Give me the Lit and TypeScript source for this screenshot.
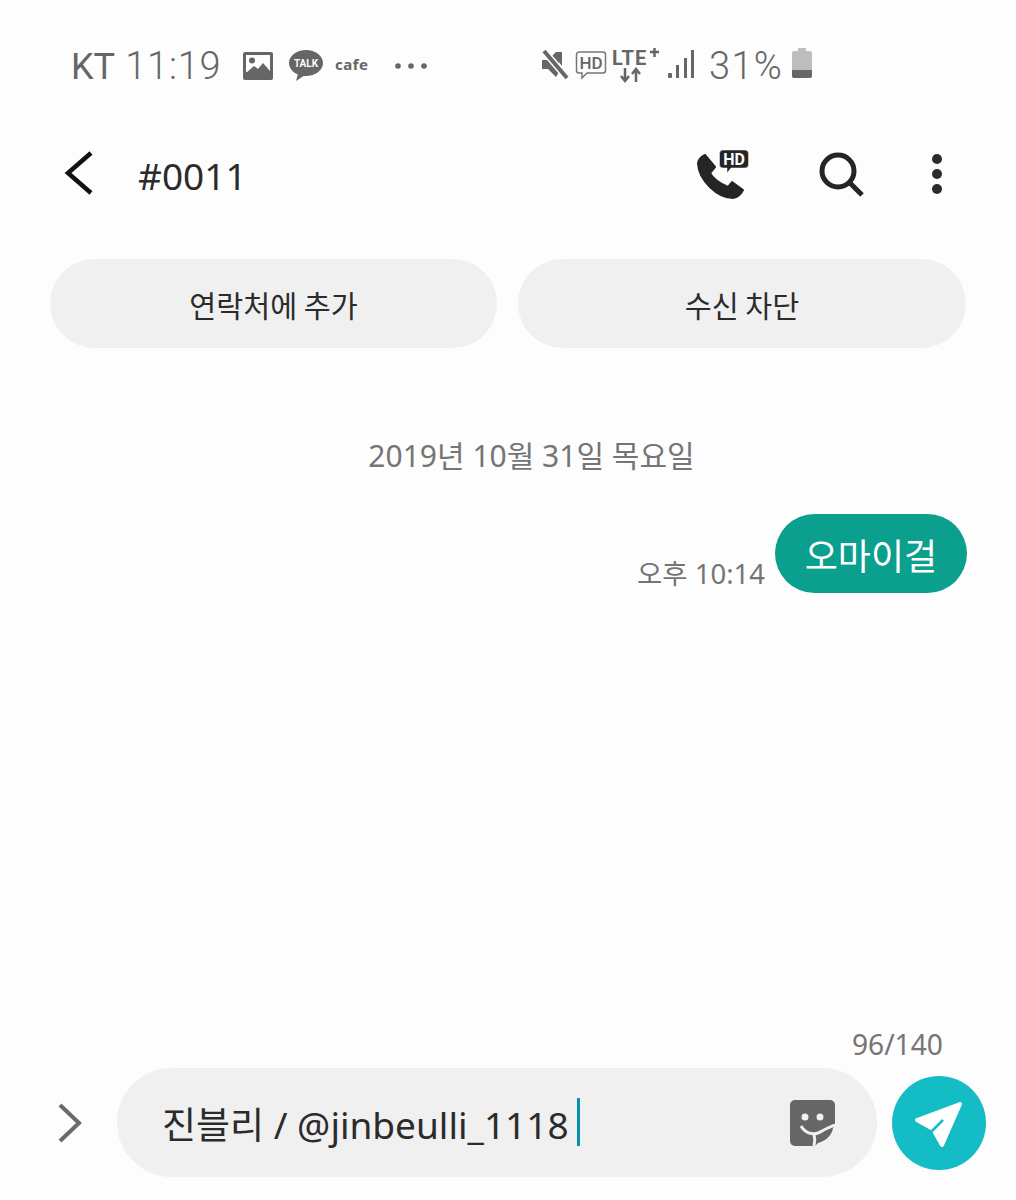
import { LitElement, html, css } from "lit";
import { customElement } from "lit/decorators.js";

@customElement("app-root")
export class AppRoot extends LitElement {
  static styles = css`
    :host {
      display: block;
      width: 1016px;
      height: 1200px;
      background: #fdfdfd;
      font-family: "Roboto", "Noto Sans CJK KR", sans-serif;
      color: #252525;
      overflow: hidden;
    }
    svg {
      display: block;
      flex: none;
      overflow: visible;
    }
    .page {
      height: 1200px;
      display: flex;
      flex-direction: column;
    }

    .status {
      height: 60px;
      margin-top: 36px;
      padding-left: 71px;
      display: flex;
      align-items: center;
      color: #666;
    }
    .status .left {
      display: flex;
      align-items: center;
      width: 471px;
    }
    .status .right {
      display: flex;
      align-items: center;
    }
    .carrier {
      font-size: 36px;
      width: 172px;
      white-space: nowrap;
    }
    .clock {
      font-size: 38px;
      font-weight: 300;
      letter-spacing: 0.8px;
    }
    .cafe {
      font-family: "Noto Sans", sans-serif;
      font-size: 15px;
      font-weight: 700;
      letter-spacing: 0.5px;
      margin: 0 25px 4px 12px;
    }
    .up2 {
      margin-bottom: 3px;
    }
    .up6 {
      margin-bottom: 6px;
    }
    .batt-text {
      font-size: 38px;
      font-weight: 300;
      letter-spacing: 1.3px;
      margin: 0 9px 0 14px;
    }

    .header {
      height: 78px;
      margin-top: 38px;
      display: flex;
      align-items: center;
      padding: 0 72px 0 64px;
    }
    .title {
      font-family: "Noto Sans", sans-serif;
      font-size: 37px;
      margin: 4px 0 0 44px;
      flex: 1;
      color: #2b2b2b;
    }
    .actions {
      display: flex;
      align-items: center;
      margin-top: 4px;
    }

    .buttons {
      margin-top: 47px;
      padding: 0 50px;
      display: grid;
      grid-template-columns: 447px 448px;
      gap: 21px;
    }
    .pill {
      height: 89px;
      border-radius: 45px;
      background: #f0f0f0;
      display: flex;
      align-items: center;
      justify-content: center;
      font-family: "Noto Sans CJK KR", sans-serif;
      font-size: 29.3px;
      color: #2b2b2b;
    }

    .date {
      margin-top: 86px;
      height: 44px;
      line-height: 44px;
      text-align: center;
      font-family: "Noto Sans", "Noto Sans CJK KR", sans-serif;
      font-size: 30px;
      color: #757575;
      padding-left: 47px;
    }

    .msg {
      margin-top: 36px;
      padding-right: 49px;
      display: flex;
      justify-content: flex-end;
      align-items: flex-end;
      gap: 10px;
    }
    .time {
      font-family: "Noto Sans", "Noto Sans CJK KR", sans-serif;
      font-size: 27.5px;
      line-height: 40px;
      color: #757575;
      margin-bottom: -1px;
    }
    .bubble {
      width: 192px;
      height: 79px;
      border-radius: 40px;
      background: #0b9f8d;
      color: #fff;
      font-family: "Noto Sans CJK KR", sans-serif;
      font-size: 36px;
      display: flex;
      align-items: center;
      justify-content: center;
    }

    .spacer {
      flex: 1;
    }
    .counter {
      text-align: right;
      padding-right: 73px;
      font-family: "Noto Sans", sans-serif;
      font-size: 28.2px;
      line-height: 40px;
      color: #757575;
      margin-bottom: 4px;
    }

    .composer {
      height: 109px;
      margin-bottom: 23px;
      display: flex;
      align-items: center;
      padding-left: 58px;
    }
    .input {
      width: 760px;
      height: 109px;
      margin-left: 35px;
      border-radius: 55px;
      background: #f0f0f0;
      display: flex;
      align-items: center;
      padding: 0 41px 0 45px;
      box-sizing: border-box;
    }
    .text {
      flex: 1;
      display: flex;
      align-items: center;
      font-family: "Noto Sans", "Noto Sans CJK KR", sans-serif;
      font-size: 37px;
      color: #2b2b2b;
      white-space: nowrap;
    }
    .caret {
      width: 3px;
      height: 48px;
      margin-bottom: 2px;
      background: #0a8fb0;
      margin-left: 8px;
    }
    .send {
      width: 94px;
      height: 94px;
      margin-left: 15px;
      border-radius: 50%;
      background: #14bcc6;
      display: flex;
      align-items: center;
      justify-content: center;
    }
  `;

  render() {
    return html`
      <div class="page">
        <div class="status">
          <div class="left">
            <span class="carrier">KT<span class="clock"> 11:19</span></span>
            <svg width="30" height="28" viewBox="0 0 30 28">
              <rect width="30" height="28" rx="2" fill="#666" />
              <rect x="3" y="3" width="24" height="17" fill="#fdfdfd" />
              <circle cx="9" cy="8.5" r="3" fill="#666" />
              <path d="M3 21 L11 14 L15 17 L20 11 L27 19 V22 H3 Z" fill="#666" />
            </svg>
            <svg style="margin-left:16px" width="34" height="32" viewBox="0 0 34 32">
              <path d="M17 0C7.6 0 0 5.8 0 13c0 5 3.6 9.2 8.8 11.5L7 31l7.6-5c.8.1 1.6.1 2.4.1 9.4 0 17-5.9 17-13.1S26.400 0 17 0Z" fill="#666" />
              <text x="17" y="17" text-anchor="middle" font-family="Roboto, sans-serif" font-size="10" font-weight="700" fill="#fdfdfd">TALK</text>
            </svg>
            <span class="cafe">cafe</span>
            <svg width="34" height="8" viewBox="0 0 34 8">
              <circle cx="4" cy="4" r="2.800" fill="#666" />
              <circle cx="17" cy="4" r="2.800" fill="#666" />
              <circle cx="30" cy="4" r="2.800" fill="#666" />
            </svg>
          </div>
          <div class="right">
            <svg class="up2" width="26" height="30" viewBox="0 0 26 30">
              <path d="M0 10h6l8-8h3v20l-3 5-8-8H0Z" fill="#666" />
              <path d="M2 1 L25 28" stroke="#fdfdfd" stroke-width="7" />
              <path d="M2 1 L25 28" stroke="#666" stroke-width="4" />
              <path d="M17 2h3v14l-3-4Z" fill="#666" />
            </svg>
            <svg class="up2" style="margin-left:7px" width="32" height="30" viewBox="0 0 32 30">
              <path d="M4 2h24a2.500 2.500 0 0 1 2.500 2.500v16A2.500 2.500 0 0 1 28 23H12l-5 5v-5H4a2.500 2.500 0 0 1-2.500-2.500v-16A2.500 2.500 0 0 1 4 2Z" fill="none" stroke="#777" stroke-width="1.500" />
              <text x="16" y="19" text-anchor="middle" font-family="Roboto, sans-serif" font-size="17" font-weight="500" fill="#666">HD</text>
            </svg>
            <svg style="margin-left:5px" width="50" height="36" viewBox="0 0 50 36">
              <text x="0" y="17" font-family="Roboto, sans-serif" font-size="20" font-weight="700" letter-spacing="1" fill="#666">LTE</text>
              <path d="M38 4h9M42.500 0v9" stroke="#666" stroke-width="2.500" />
              <path d="M13 20v13M9 28l4 5 4-5" fill="none" stroke="#666" stroke-width="2.500" />
              <path d="M24 34V21M20 26l4-5 4 5" fill="none" stroke="#666" stroke-width="2.500" />
            </svg>
            <svg class="up2" style="margin-left:6px" width="27" height="29" viewBox="0 0 27 29">
              <rect x="0" y="23" width="4" height="5" rx="1" fill="#666" />
              <rect x="8" y="15" width="3" height="13" fill="#666" />
              <rect x="16" y="8" width="3" height="20" fill="#666" />
              <rect x="23" y="0" width="3" height="28" fill="#666" />
            </svg>
            <span class="batt-text">31%</span>
            <svg class="up6" width="20" height="30" viewBox="0 0 20 30">
              <path d="M6 0h8v3h4a2 2 0 0 1 2 2v17H0V5a2 2 0 0 1 2-2h4Z" fill="#bdbdbd" />
              <path d="M0 22h20v6a2 2 0 0 1-2 2H2a2 2 0 0 1-2-2Z" fill="#666" />
            </svg>
          </div>
        </div>

        <div class="header">
          <svg width="30" height="44" viewBox="0 0 30 44">
            <path d="M27 2 L4 22 L27 42" fill="none" stroke="#111" stroke-width="4.500" />
          </svg>
          <span class="title">#0011</span>
          <div class="actions">
            <svg width="54" height="52" viewBox="0 0 54 52">
              <path d="M8 6C4 8 1 11 1 15C2 31 20 49 36 49C40 49 44 45 46 41L35 33L31 38C24 35 16 30 13 24L18 18Z" fill="#252525" stroke="#252525" stroke-width="2" stroke-linejoin="round" />
              <path d="M26 1h22a3.500 3.500 0 0 1 3.500 3.500v11a3.500 3.500 0 0 1-3.500 3.500H34l-4 5v-5h-4a3.500 3.500 0 0 1-3.500-3.500v-11A3.500 3.500 0 0 1 26 1Z" fill="#252525" stroke="#fdfdfd" stroke-width="0.500" />
              <text x="37" y="16" text-anchor="middle" font-family="Roboto, sans-serif" font-size="16" font-weight="700" fill="#fdfdfd">HD</text>
            </svg>
            <svg style="margin-left:68px" width="46" height="46" viewBox="0 0 46 46">
              <circle cx="19" cy="19" r="16" fill="none" stroke="#252525" stroke-width="5" />
              <path d="M30 30 L43 43" stroke="#252525" stroke-width="5" />
            </svg>
            <svg style="margin-left:65px" width="14" height="42" viewBox="0 0 14 42">
              <circle cx="7" cy="5" r="5" fill="#2b2b2b" />
              <circle cx="7" cy="20" r="5" fill="#2b2b2b" />
              <circle cx="7" cy="35" r="5" fill="#2b2b2b" />
            </svg>
          </div>
        </div>

        <div class="buttons">
          <div class="pill">연락처에 추가</div>
          <div class="pill">수신 차단</div>
        </div>

        <div class="date">2019년 10월 31일 목요일</div>

        <div class="msg">
          <span class="time">오후 10:14</span>
          <div class="bubble">오마이걸</div>
        </div>

        <div class="spacer"></div>

        <div class="counter">96/140</div>
        <div class="composer">
          <svg width="24" height="40" viewBox="0 0 24 40">
            <path d="M2 2 L21 20 L2 38" fill="none" stroke="#6a6a6a" stroke-width="4" />
          </svg>
          <div class="input">
            <div class="text">진블리 / @jinbeulli_1118<span class="caret"></span></div>
            <svg width="46" height="46" viewBox="0 0 46 46">
              <path d="M5 0h35a5 5 0 0 1 5 5V26L25 46H5a5 5 0 0 1-5-5V5a5 5 0 0 1 5-5Z" fill="#666" />
              <circle cx="15" cy="17" r="3.500" fill="#f0f0f0" />
              <circle cx="30" cy="17" r="3.500" fill="#f0f0f0" />
              <path d="M11 26C15 33 22 35 28 33C33 31 40 26 46 25" fill="none" stroke="#f0f0f0" stroke-width="3" />
              <path d="M24 34C25 38 25 42 24 46" fill="none" stroke="#f0f0f0" stroke-width="3" />
              <path d="M28 43C28 35 34 30 43 28C42 35 36 41 28 43Z" fill="#666" />
            </svg>
          </div>
          <div class="send">
            <svg width="50" height="50" viewBox="0 0 50 50">
              <path d="M46 6 L3 22 L19 31 L28 47 Z" fill="#fff" stroke="#fff" stroke-width="4" stroke-linejoin="round" />
              <path d="M17 34 L29 22" stroke="#14bcc6" stroke-width="2.500" />
            </svg>
          </div>
        </div>
      </div>
    `;
  }
}
